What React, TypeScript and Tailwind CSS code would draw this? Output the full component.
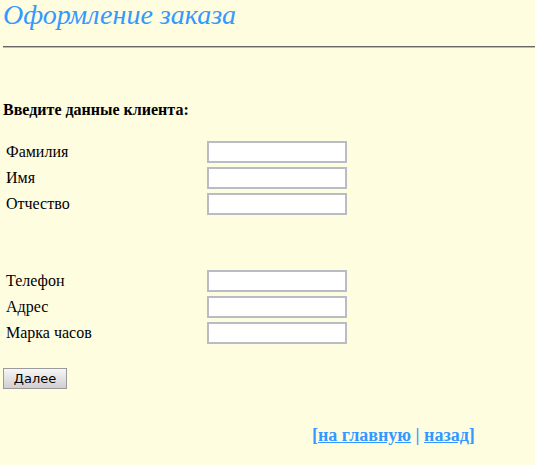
export default function App() {
  const first = ['Фамилия', 'Имя', 'Отчество'];
  const second = ['Телефон', 'Адрес', 'Марка часов'];

  const row = (label: string) => (
    <div key={label} className="flex items-center h-[26px]">
      <span className="w-[204px] pl-[3px]">{label}</span>
      <input
        type="text"
        className="w-[140px] h-[22px] bg-white border-2 border-[#b9bcc4] outline-none"
      />
    </div>
  );

  return (
    <div
      className="min-h-screen bg-[#fffde0] text-black text-[16px] leading-[20px] px-[3px]"
      style={{ fontFamily: '"Liberation Serif", "DejaVu Serif", serif' }}
    >
      <h1 className="text-[28px] leading-[28px] italic text-[#3399ff] pt-[1px]">Оформление заказа</h1>
      <div className="mt-[17px] -mr-[3px] border-t border-[#666] border-b border-b-[#bbb]" />

      <div className="mt-[52px] font-bold">Введите данные клиента:</div>

      <div className="mt-[19px]">{first.map(row)}</div>
      <div className="mt-[51px]">{second.map(row)}</div>

      <button
        className="mt-[22px] w-[64px] h-[21px] text-[13px] leading-[19px] border border-[#9a9a9a] bg-gradient-to-b from-[#f6f6f6] to-[#cfcfd2]"
        style={{ fontFamily: '"DejaVu Sans", "Liberation Sans", sans-serif' }}
      >
        Далее
      </button>

      <div className="mt-[36px] pl-[309px] text-[18px] font-bold text-[#3399ff]">
        [<a href="#" className="underline">на главную</a> | <a href="#" className="underline">назад</a>]
      </div>
    </div>
  );
}
